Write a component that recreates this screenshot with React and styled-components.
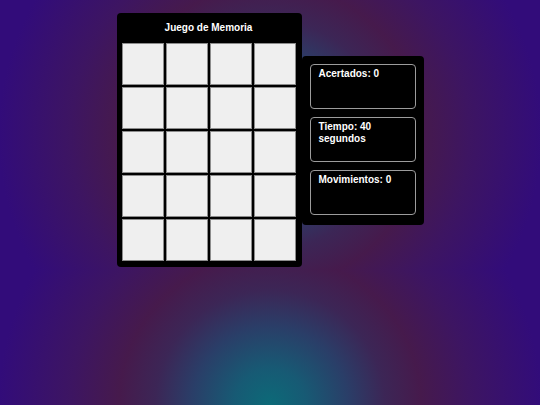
import React from 'react';
import styled, { createGlobalStyle } from 'styled-components';

const GlobalStyle = createGlobalStyle`
  html {
    min-height: 100%;
    background: radial-gradient(
      circle farthest-corner at 50% 50%,
      #0c6a78 0%,
      #175a74 12%,
      #2a3e68 26%,
      #3c2656 38%,
      #461a4c 50%,
      #3d1562 66%,
      #320c7a 90%
    );
    background-size: 100% 270px;
    background-repeat: repeat;
  }
  body {
    margin: 0;
    font-family: "Liberation Sans", Arial, sans-serif;
  }
`;

const cards = Array.from({ length: 20 }, (_, i) => i);

const stats = [
  { id: 'hits', label: 'Acertados: 0' },
  { id: 'time', label: 'Tiempo: 40 segundos' },
  { id: 'moves', label: 'Movimientos: 0' },
];

export default function App() {
  return (
    <>
      <GlobalStyle />
      <StyledPage>
        <StyledBoard>
          <StyledTitle>Juego de Memoria</StyledTitle>
          <StyledGrid>
            {cards.map((c) => (
              <StyledCard key={c} />
            ))}
          </StyledGrid>
        </StyledBoard>
        <StyledStats>
          {stats.map((s) => (
            <StyledStat key={s.id}>{s.label}</StyledStat>
          ))}
        </StyledStats>
      </StyledPage>
    </>
  );
}

const StyledPage = styled.div`
  display: flex;
  justify-content: center;
  align-items: center;
  padding-top: 13px;
`;

const StyledBoard = styled.div`
  box-sizing: border-box;
  width: 185px;
  padding: 5px 6px 6px 5px;
  background-color: #000;
  border-radius: 4px;
`;

const StyledTitle = styled.h1`
  margin: 0 0 5px;
  height: 20px;
  line-height: 20px;
  font-size: 10px;
  font-weight: bold;
  color: #fff;
  text-align: center;
`;

const StyledGrid = styled.div`
  display: grid;
  grid-template-columns: repeat(4, 42px);
  grid-auto-rows: 42px;
  gap: 2px;
`;

const StyledCard = styled.div`
  box-sizing: border-box;
  background-color: #efefef;
  border: 1px solid #8c8c8c;
`;

const StyledStats = styled.div`
  box-sizing: border-box;
  width: 122px;
  padding: 8px 8px 10px 8px;
  display: flex;
  flex-direction: column;
  gap: 8px;
  background-color: #000;
  border-radius: 4px;
`;

const StyledStat = styled.div`
  box-sizing: border-box;
  height: 45px;
  padding: 3px 8px;
  border: 1px solid #9c9c9c;
  border-radius: 4px;
  color: #fff;
  font-size: 10px;
  font-weight: bold;
  line-height: 12px;
`;
